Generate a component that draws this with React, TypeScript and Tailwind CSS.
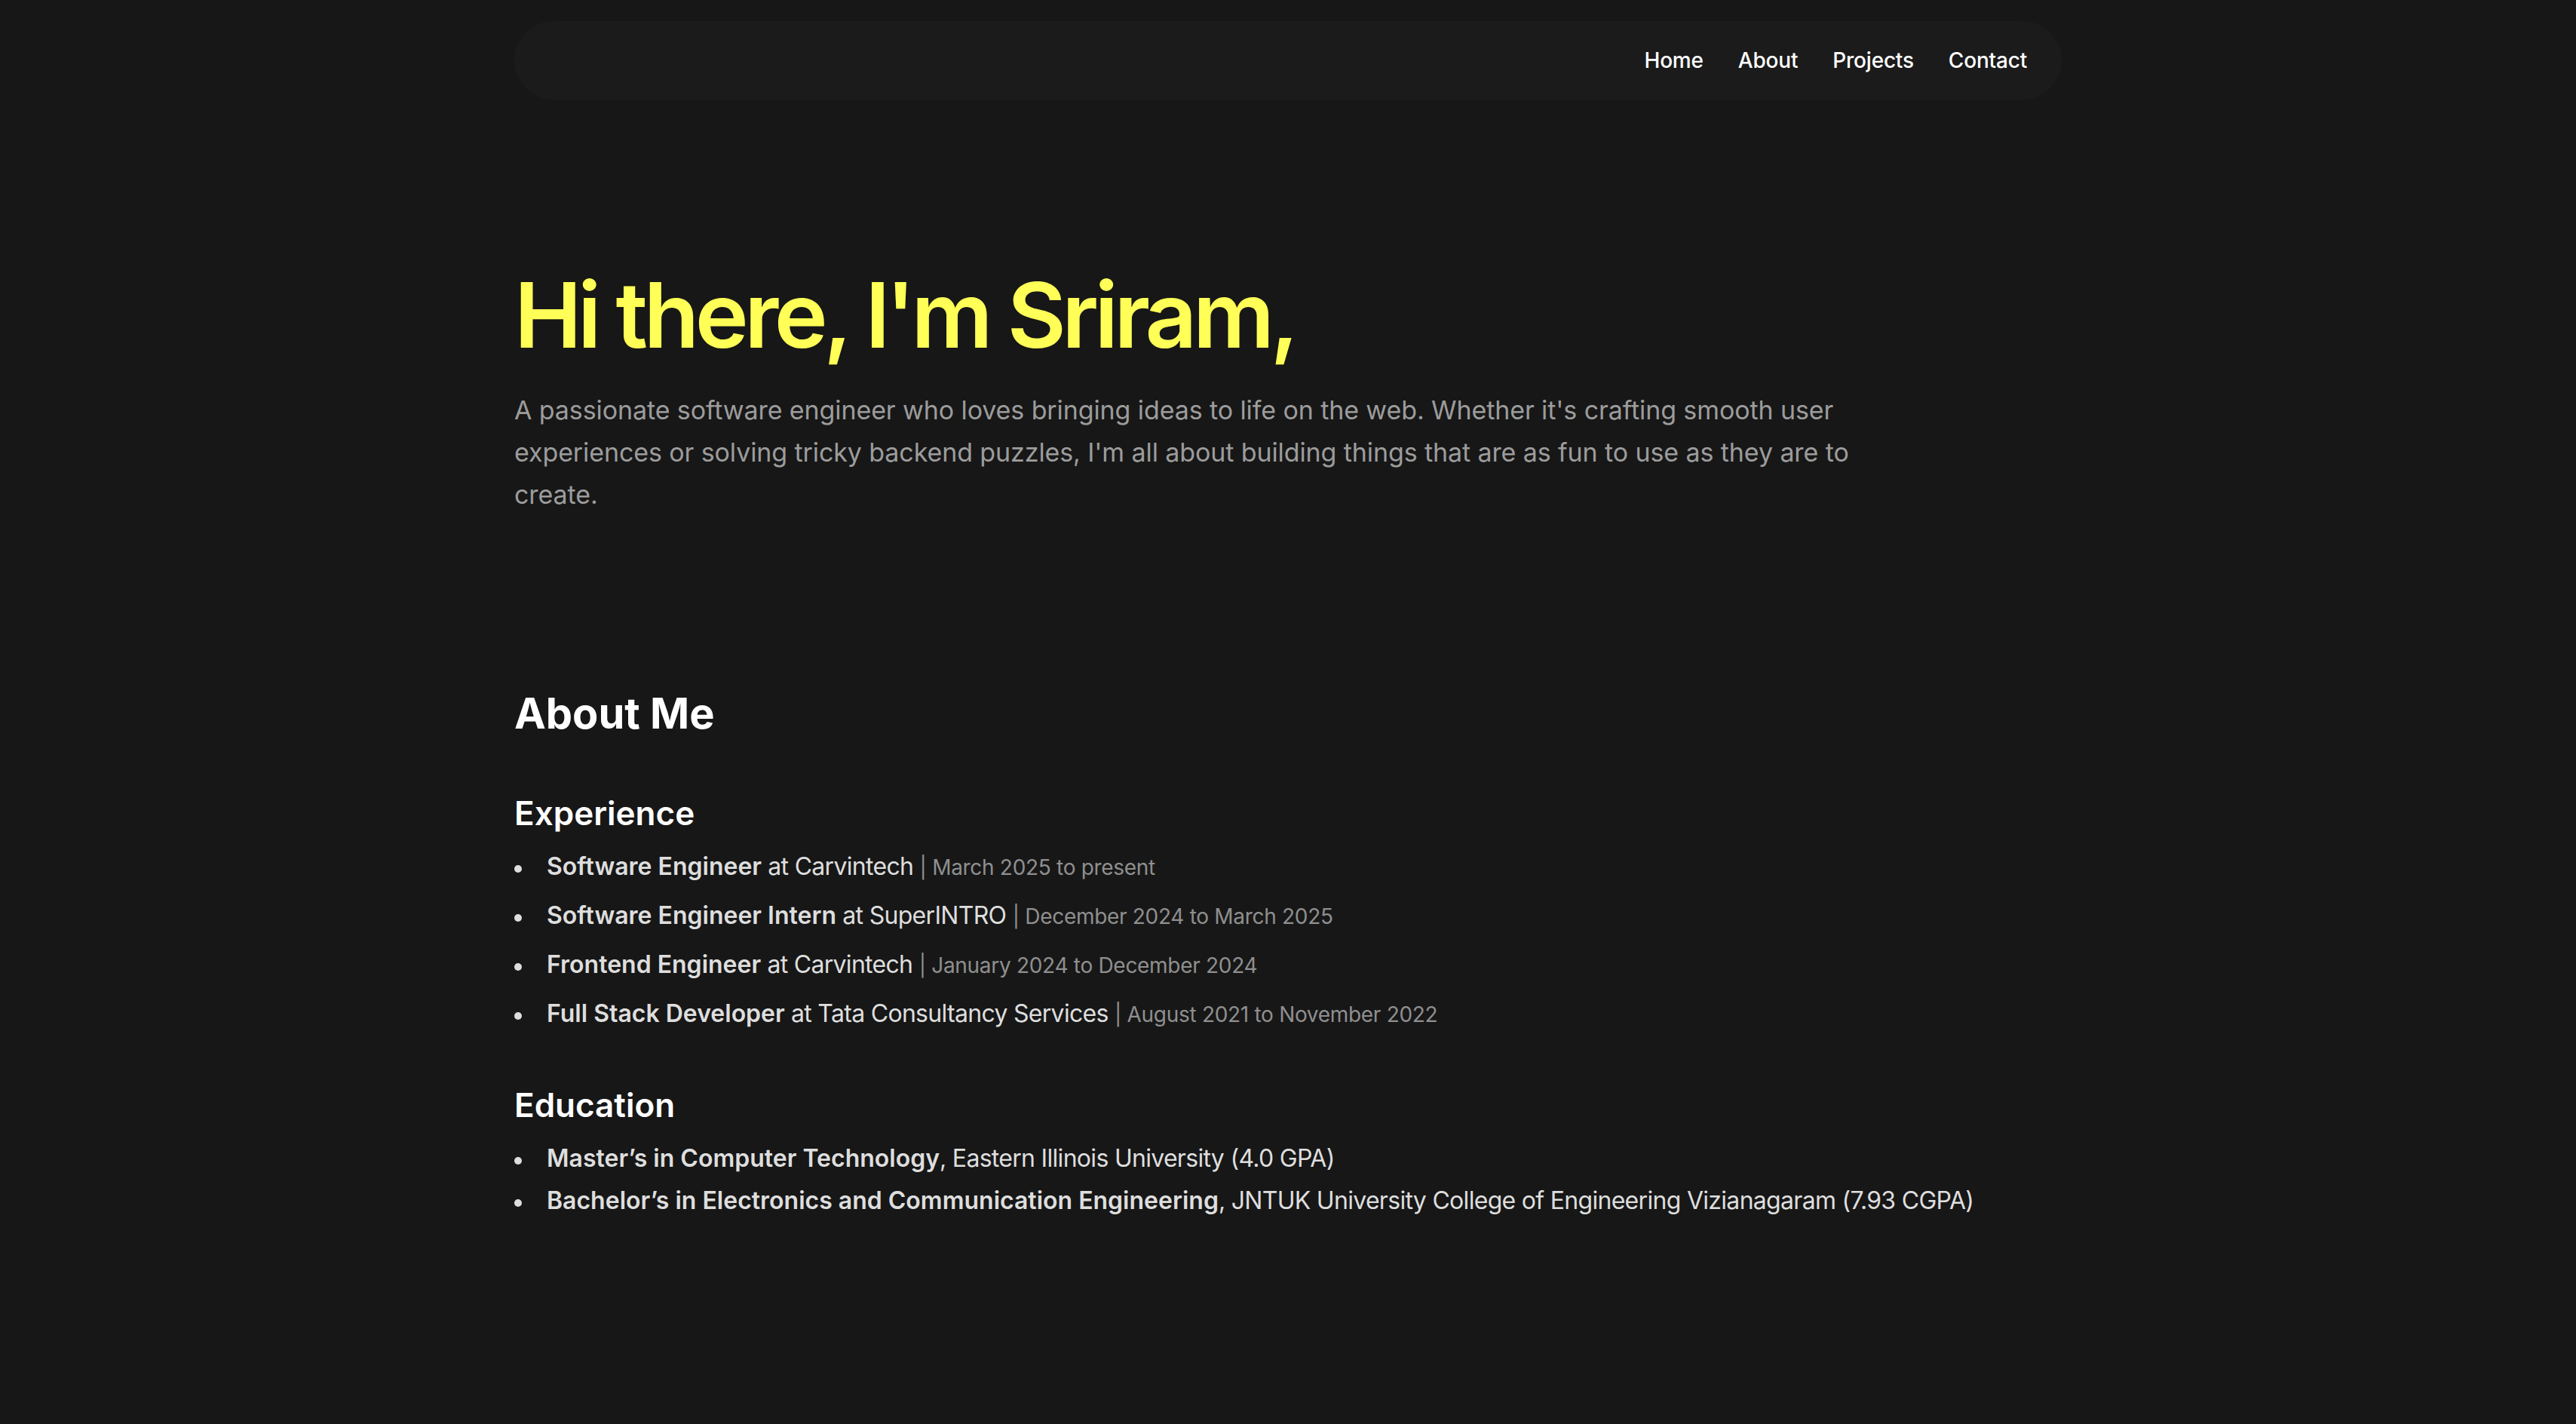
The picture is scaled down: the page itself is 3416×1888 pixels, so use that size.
import React from "react";

const experience = [
  { role: "Software Engineer", company: "Carvintech", dates: "March 2025 to present" },
  { role: "Software Engineer Intern", company: "SuperINTRO", dates: "December 2024 to March 2025" },
  { role: "Frontend Engineer", company: "Carvintech", dates: "January 2024 to December 2024" },
  { role: "Full Stack Developer", company: "Tata Consultancy Services", dates: "August 2021 to November 2022" },
];

const education = [
  { degree: "Master\u2019s in Computer Technology", school: "Eastern Illinois University (4.0 GPA)" },
  {
    degree: "Bachelor\u2019s in Electronics and Communication Engineering",
    school: "JNTUK University College of Engineering Vizianagaram (7.93 CGPA)",
  },
];

function Bullet() {
  return (
    <span className="flex w-[43px] shrink-0 pt-[22px]">
      <span className="block h-[10px] w-[10px] rounded-full bg-[#dedede]" />
    </span>
  );
}

export default function App() {
  return (
    <div
      className="min-h-screen w-full bg-[#171717] text-white overflow-hidden"
      style={{ fontFamily: "Inter, 'Noto Sans', sans-serif" }}
    >
      <div className="h-[1888px] overflow-hidden">
        <div className="mx-auto w-[2052px] pt-[28px]">
          <nav className="flex h-[104px] items-center justify-end rounded-full bg-[#1b1b1b] pr-[46px]">
            <ul className="flex items-center gap-[46px] text-[28px] leading-[40px] font-medium tracking-[-0.2px] text-white">
              <li>Home</li>
              <li>About</li>
              <li>Projects</li>
              <li>Contact</li>
            </ul>
          </nav>

          <section className="pt-[226px]">
            <h1 className="text-[120px] leading-[120px] font-semibold tracking-[-5.5px] text-[#ffff57]">
              Hi there, I'm Sriram,
            </h1>
            <p className="mt-[38px] max-w-[1792px] text-[34px] leading-[56px] tracking-[-0.1px] text-[#9c9c9c]">
              A passionate software engineer who loves bringing ideas to life on the web. Whether it's crafting smooth
              user experiences or solving tricky backend puzzles, I'm all about building things that are as fun to use
              as they are to create.
            </p>
          </section>

          <section className="pt-[230px]">
            <h2 className="text-[56px] leading-[64px] font-bold text-white">About Me</h2>

            <h3 className="mt-[72px] text-[44px] leading-[56px] font-semibold text-white">Experience</h3>
            <ul className="mt-[19px] flex flex-col gap-[16px] text-[32px] leading-[48px] text-[#dedede]">
              {experience.map((e) => (
                <li key={e.role} className="flex">
                  <Bullet />
                  <span className="tracking-[-0.7px]">
                    <span className="font-semibold tracking-normal">{e.role}</span> at {e.company}{" "}
                    <span className="text-[28px] tracking-[-0.3px] text-[#8f8f8f]">| {e.dates}</span>
                  </span>
                </li>
              ))}
            </ul>

            <h3 className="mt-[68px] text-[44px] leading-[56px] font-semibold text-white">Education</h3>
            <ul className="mt-[19px] flex flex-col gap-[8px] text-[32px] leading-[48px] text-[#dedede]">
              {education.map((e) => (
                <li key={e.degree} className="flex">
                  <Bullet />
                  <span className="tracking-[-0.7px]">
                    <span className="font-semibold tracking-normal">{e.degree}</span>, {e.school}
                  </span>
                </li>
              ))}
            </ul>
          </section>

          <section className="pt-[264px]">
            <h2 className="text-[56px] leading-[64px] font-bold text-white">Projects</h2>
          </section>
        </div>
      </div>
    </div>
  );
}
